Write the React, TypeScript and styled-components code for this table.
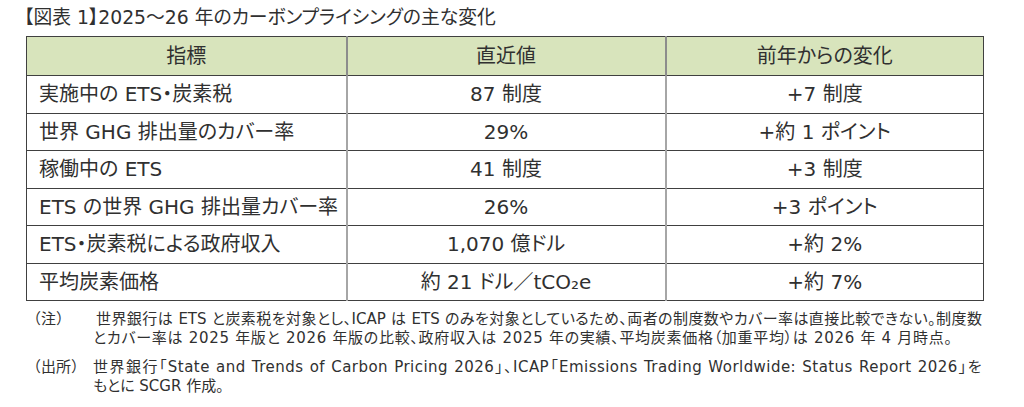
import * as React from "react";
import styled, { createGlobalStyle } from "styled-components";

const GlobalStyle = createGlobalStyle`
  html, body {
    margin: 0;
    padding: 0;
    background: #ffffff;
  }
  body {
    font-family: "DejaVu Sans", "Noto Sans CJK JP", sans-serif;
    font-feature-settings: "palt";
    color: #303030;
  }
`;

interface Row {
  label: string;
  value: string;
  change: string;
}

const rows: Row[] = [
  { label: "実施中の ETS・炭素税", value: "87 制度", change: "+7 制度" },
  { label: "世界 GHG 排出量のカバー率", value: "29%", change: "+約 1 ポイント" },
  { label: "稼働中の ETS", value: "41 制度", change: "+3 制度" },
  { label: "ETS の世界 GHG 排出量カバー率", value: "26%", change: "+3 ポイント" },
  { label: "ETS・炭素税による政府収入", value: "1,070 億ドル", change: "+約 2%" },
  { label: "平均炭素価格", value: "約 21 ドル／tCO₂e", change: "+約 7%" },
];

interface NoteLineData {
  text: string;
  tracking?: number;
}

// each note line as it breaks in the original
const notes: { label: string; indent: boolean; lines: NoteLineData[] }[] = [
  {
    label: "（注）",
    indent: true,
    lines: [
      {
        text: "世界銀行は ETS と炭素税を対象とし、ICAP は ETS のみを対象としているため、両者の制度数やカバー率は直接比較できない。制度数",
      },
      {
        text: "とカバー率は 2025 年版と 2026 年版の比較、政府収入は 2025 年の実績、平均炭素価格（加重平均）は 2026 年 4 月時点。",
        tracking: 0.7,
      },
    ],
  },
  {
    label: "（出所）",
    indent: false,
    lines: [
      {
        text: "世界銀行「State and Trends of Carbon Pricing 2026」、ICAP「Emissions Trading Worldwide: Status Report 2026」を",
        tracking: 0.45,
      },
      { text: "もとに SCGR 作成。" },
    ],
  },
];

export default function App() {
  return (
    <Page>
      <GlobalStyle />
      <Title>【図表 1】2025～26 年のカーボンプライシングの主な変化</Title>
      <Table>
        <colgroup>
          <col style={{ width: "320px" }} />
          <col style={{ width: "319px" }} />
          <col style={{ width: "318px" }} />
        </colgroup>
        <thead>
          <tr>
            <HeadCell>指標</HeadCell>
            <HeadCell>直近値</HeadCell>
            <HeadCell>前年からの変化</HeadCell>
          </tr>
        </thead>
        <tbody>
          {rows.map((row) => (
            <tr key={row.label}>
              <Cell align="left">{row.label}</Cell>
              <Cell align="center">{row.value}</Cell>
              <Cell align="center">{row.change}</Cell>
            </tr>
          ))}
        </tbody>
      </Table>
      <Notes>
        {notes.map((note) => (
          <React.Fragment key={note.label}>
            <NoteLabel>{note.label}</NoteLabel>
            <NoteText>
              {note.lines.map((line, i) => (
                <NoteLine
                  key={i}
                  justify={i < note.lines.length - 1}
                  indent={note.indent && i === 0}
                  tracking={line.tracking ?? 0}
                >
                  {line.text}
                </NoteLine>
              ))}
            </NoteText>
          </React.Fragment>
        ))}
      </Notes>
    </Page>
  );
}

const Page = styled.div`
  width: 1024px;
  height: 407px;
  padding: 6px 0 0 26px;
  box-sizing: border-box;
  overflow: hidden;
`;

const Title = styled.div`
  font-size: 18.8px;
  line-height: 24px;
  margin: 0 0 6px -2px;
  white-space: nowrap;
`;

const Table = styled.table`
  width: 957px;
  border-collapse: collapse;
  table-layout: fixed;
  border-left: 1.5px solid #404040;
  border-right: 1.5px solid #404040;
  font-size: 20px;
  line-height: 26px;
`;

const HeadCell = styled.th`
  height: 38px;
  padding: 0;
  font-weight: normal;
  background: #d8e4bc;
  text-align: center;
  border-top: 1.5px solid #404040;
  border-bottom: 1.5px solid #404040;
  & + & {
    border-left: 2px solid #8c8c8c;
  }
`;

const Cell = styled.td<{ align: "left" | "center" }>`
  height: 36.5px;
  padding: 0 12px;
  text-align: ${(p) => p.align};
  white-space: nowrap;
  border-bottom: 1.5px solid #404040;
  & + & {
    border-left: 2px solid #a6a6a6;
  }
`;

const Notes = styled.div`
  display: grid;
  grid-template-columns: 67px 889px;
  row-gap: 10px;
  margin-top: 9px;
  font-size: 15px;
  line-height: 19px;
`;

const NoteLabel = styled.div`
  white-space: nowrap;
  font-feature-settings: normal;
`;

const NoteText = styled.div`
  display: flex;
  flex-direction: column;
`;

const NoteLine = styled.div<{ justify: boolean; indent: boolean; tracking: number }>`
  white-space: nowrap;
  letter-spacing: ${(p) => p.tracking}px;
  text-align: ${(p) => (p.justify ? "justify" : "left")};
  text-align-last: ${(p) => (p.justify ? "justify" : "left")};
  padding-left: ${(p) => (p.indent ? "3px" : "0")};
`;
